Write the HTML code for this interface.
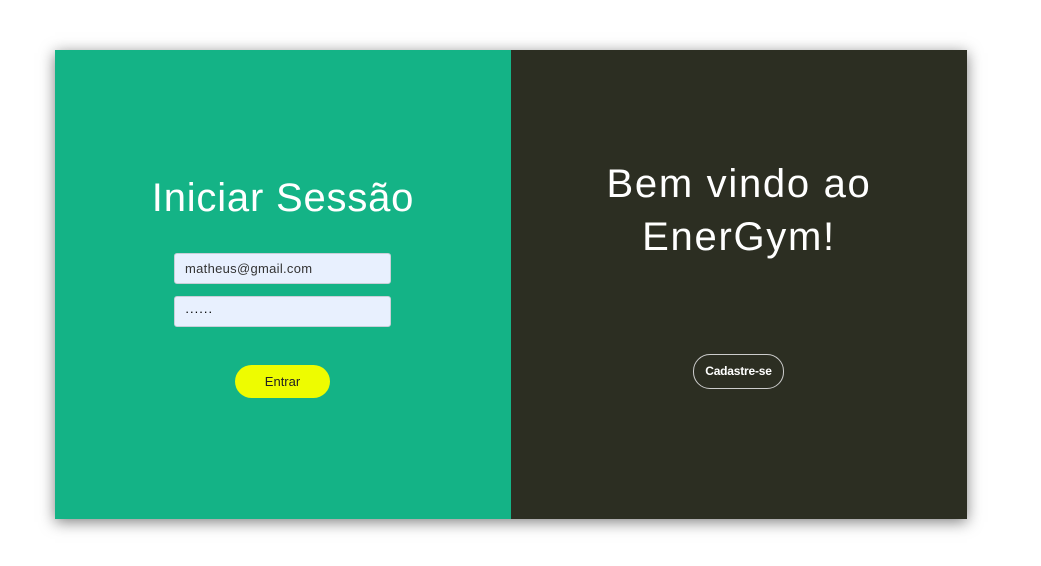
<!DOCTYPE html>
<html><head><meta charset="utf-8"><style>
body{margin:0;width:1041px;height:566px;background:#fff;font-family:"Liberation Sans",sans-serif;position:relative;overflow:hidden}
.card{position:absolute;left:55px;top:50px;width:912px;height:469px;box-shadow:0 3px 14px rgba(0,0,0,.5);display:flex}
.l{width:456px;height:469px;background:#14b386;position:relative}
.r{width:456px;height:469px;background:#2c2e22;position:relative}
h1{margin:0;font-weight:normal;color:#fff;font-size:40px;text-align:center;position:absolute;left:0;right:0}
.in{position:absolute;left:119px;height:29px;background:#e8f0fe;border:1px solid #c9cfd8;border-radius:3px;font-size:13px;color:#333;line-height:29px;padding-left:10px;width:205px;letter-spacing:0.3px}
.btn{position:absolute;left:180px;top:315px;width:95px;height:33px;background:#eefc00;border-radius:17px;text-align:center;line-height:33px;font-size:13px;color:#222}
.cad{position:absolute;left:182px;top:304px;width:89px;height:33px;border:1px solid #ccc;border-radius:17px;color:#fff;font-weight:bold;font-size:12px;text-align:center;line-height:33px;letter-spacing:-0.2px}
</style></head><body>
<div class="card">
<div class="l">
<h1 style="top:126px;letter-spacing:0.8px">Iniciar Sessão</h1>
<div class="in" style="top:203px">matheus@gmail.com</div>
<div class="in" style="top:246px;color:#000">······</div>
<div class="btn">Entrar</div>
</div>
<div class="r">
<h1 style="top:108px;line-height:53px;letter-spacing:1.7px">Bem vindo ao<br>EnerGym!</h1>
<div class="cad">Cadastre-se</div>
</div>
</div>
</body></html>
